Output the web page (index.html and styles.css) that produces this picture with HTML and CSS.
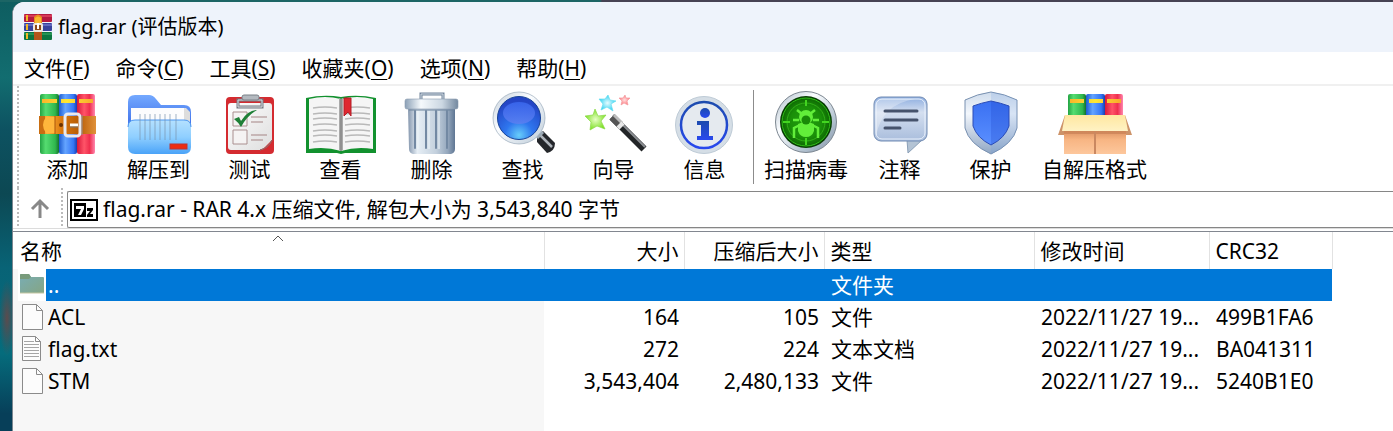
FILE: index.html
```html
<!DOCTYPE html>
<html lang="zh-CN">
<head>
<meta charset="utf-8">
<title>flag.rar (评估版本)</title>
<link rel="stylesheet" href="styles.css">
</head>
<body>
<svg class="defs" aria-hidden="true">
  <defs>
    <linearGradient id="green"><stop offset="0" stop-color="#23a343"/><stop offset=".3" stop-color="#55dc70"/><stop offset=".8" stop-color="#2fb74e"/><stop offset="1" stop-color="#15702c"/></linearGradient>
    <linearGradient id="blue"><stop offset="0" stop-color="#1d5bd0"/><stop offset=".35" stop-color="#64a4ff"/><stop offset=".8" stop-color="#3476f5"/><stop offset="1" stop-color="#1a3fae"/></linearGradient>
    <linearGradient id="red"><stop offset="0" stop-color="#d8183a"/><stop offset=".4" stop-color="#ff5468"/><stop offset=".7" stop-color="#ef2f4e"/><stop offset="1" stop-color="#ff86ae"/></linearGradient>
    <linearGradient id="gold"><stop offset="0" stop-color="#f9b52a"/><stop offset=".5" stop-color="#ffe834"/><stop offset="1" stop-color="#f7a92c"/></linearGradient>
    <linearGradient id="belt"><stop offset="0" stop-color="#e58a1c"/><stop offset=".15" stop-color="#ffb136"/><stop offset=".4" stop-color="#d9780f"/><stop offset=".7" stop-color="#b85c06"/><stop offset="1" stop-color="#e0913a"/></linearGradient>
    <linearGradient id="steel" x1="0" y1="0" x2="1" y2="1"><stop offset="0" stop-color="#a9b8c6"/><stop offset=".35" stop-color="#fbfdff"/><stop offset=".7" stop-color="#b5c4d2"/><stop offset="1" stop-color="#7e8fa3"/></linearGradient>
    <linearGradient id="bright" x1="0" y1="0" x2="1" y2="1"><stop offset="0" stop-color="#c3ced9"/><stop offset=".4" stop-color="#fbfdff"/><stop offset="1" stop-color="#bccbd8"/></linearGradient>
    <linearGradient id="paper" x1="0" y1="0" x2="1" y2="1"><stop offset="0" stop-color="#fff"/><stop offset="1" stop-color="#dedede"/></linearGradient>
    <linearGradient id="back" x1="0" y1="0" x2="0" y2="1"><stop offset="0" stop-color="#74a9ff"/><stop offset="1" stop-color="#2656df"/></linearGradient>
    <linearGradient id="front" x1="0" y1="0" x2="0" y2="1"><stop offset="0" stop-color="#b5e1ff"/><stop offset=".5" stop-color="#8fcfff"/><stop offset="1" stop-color="#4aa3f8"/></linearGradient>
    <linearGradient id="trash"><stop offset="0" stop-color="#8496ad"/><stop offset=".2" stop-color="#e6eef5"/><stop offset=".6" stop-color="#c3d0dd"/><stop offset=".85" stop-color="#93a6bc"/><stop offset="1" stop-color="#5f7693"/></linearGradient>
    <linearGradient id="rim"><stop offset="0" stop-color="#8ba0b6"/><stop offset=".3" stop-color="#f5f9fc"/><stop offset=".7" stop-color="#cbd7e2"/><stop offset="1" stop-color="#73889f"/></linearGradient>
    <radialGradient id="lens" cx=".5" cy=".9" r=".8"><stop offset="0" stop-color="#67cdfa"/><stop offset=".4" stop-color="#2e76ee"/><stop offset="1" stop-color="#2444c5"/></radialGradient>
    <linearGradient id="gloss" x1="0" y1="0" x2="0" y2="1"><stop offset="0" stop-color="#3c6af2"/><stop offset="1" stop-color="#6080f0"/></linearGradient>
    <linearGradient id="info" x1="0" y1="0" x2="0" y2="1"><stop offset="0" stop-color="#1d4cae"/><stop offset="1" stop-color="#2848ee"/></linearGradient>
    <radialGradient id="scan"><stop offset="0" stop-color="#249e10"/><stop offset=".65" stop-color="#1a9009"/><stop offset="1" stop-color="#0f6a04"/></radialGradient>
    <linearGradient id="note" x1="0" y1="0" x2="0" y2="1"><stop offset="0" stop-color="#8eaee0"/><stop offset=".35" stop-color="#d4dff0"/><stop offset="1" stop-color="#a9bddc"/></linearGradient>
    <linearGradient id="shield" x1="0" y1="0" x2="0" y2="1"><stop offset="0" stop-color="#cfdcec"/><stop offset=".35" stop-color="#f3f7fc"/><stop offset="1" stop-color="#8fa6c4"/></linearGradient>
    <linearGradient id="core" x1="0" y1="0" x2="0" y2="1"><stop offset="0" stop-color="#3a70f2"/><stop offset="1" stop-color="#5a8fff"/></linearGradient>
    <linearGradient id="carton" x1="0" y1="0" x2="0" y2="1"><stop offset="0" stop-color="#d98e5e"/><stop offset=".4" stop-color="#f7b583"/><stop offset="1" stop-color="#fdc79c"/></linearGradient>
    <linearGradient id="flap" x1="0" y1="0" x2="0" y2="1"><stop offset="0" stop-color="#ffe7a0"/><stop offset="1" stop-color="#fff2c4"/></linearGradient>
    <radialGradient id="starG"><stop offset="0" stop-color="#e6ffc4"/><stop offset="1" stop-color="#7fe028"/></radialGradient>
    <radialGradient id="starC"><stop offset="0" stop-color="#e6fcff"/><stop offset="1" stop-color="#35d2f2"/></radialGradient>
    <radialGradient id="starR"><stop offset="0" stop-color="#ffe0e0"/><stop offset="1" stop-color="#ff7a80"/></radialGradient>
    <linearGradient id="dir" x1="0" y1="0" x2="1" y2="1"><stop offset="0" stop-color="#78adb5"/><stop offset="1" stop-color="#85a584"/></linearGradient>
  </defs>
</svg>

<main class="window">
  <header class="titlebar">
    <svg class="appicon" viewBox="0 0 28 26" aria-hidden="true">
      <rect width="28" height="8" rx="1" fill="#b51940"/><rect y="1" width="28" height="2" fill="#d63a58"/>
      <rect y="9" width="28" height="8" rx="1" fill="#38439d"/><rect y="10" width="28" height="2" fill="#6068be"/>
      <rect y="18" width="28" height="8" rx="1" fill="#0b7540"/><rect y="19" width="28" height="2" fill="#259453"/>
      <path d="M3 1v6M3 10v6M3 19v6" stroke="#f3b926" stroke-width="2"/>
      <path d="M10 3q4-5 8 0v23h-8z" fill="#e88a20"/><path d="M11 4q3-3 6 0v5h-6z" fill="#f8b930"/>
      <rect x="10" y="10" width="8" height="7" rx="1" fill="#8f4a18" stroke="#efe8dc" stroke-width="2"/>
      <path d="M14 9v6" stroke="#fff" stroke-width="2"/><path d="M10 18h8v8h-8z" fill="#b4551a"/>
    </svg>
    <h1 class="title">flag.rar (评估版本)</h1>
  </header>

  <nav class="menubar" aria-label="菜单">
    <button class="menu">文件(<u>F</u>)</button>
    <button class="menu">命令(<u>C</u>)</button>
    <button class="menu">工具(<u>S</u>)</button>
    <button class="menu">收藏夹(<u>O</u>)</button>
    <button class="menu">选项(<u>N</u>)</button>
    <button class="menu">帮助(<u>H</u>)</button>
  </nav>

  <div class="toolbar" role="toolbar">
    <span class="grip"></span>
    <button class="tool">
      <svg class="icon" viewBox="0 0 64 64" aria-hidden="true">
        <rect x="4" y="2" width="19" height="60" rx="2" fill="url(#green)"/><rect x="23" y="2" width="18" height="60" rx="2" fill="url(#blue)"/><rect x="41" y="2" width="18" height="60" rx="2" fill="url(#red)"/>
        <path d="M6 7h15v4H6zM25 7h14v4H25zM43 7h14v4H43z" fill="url(#gold)"/>
        <path d="M8 24h52v18H8q-5-3-5-9t5-9z" fill="url(#belt)"/><path d="M3 24h6v18H3z" fill="#c96e12"/>
        <path d="M10 25h9v16h-9q-6-8 0-16z" fill="#ffb63c"/><path d="M19 24v18M44 24v18" stroke="#a9540a"/>
        <circle cx="25" cy="33" r="2" fill="#6b3100"/>
        <rect x="29" y="22" width="15" height="22" rx="3" fill="none" stroke="#e9e9ee" stroke-width="3"/>
        <path d="M46 23v20" stroke="#8f8f98"/><path d="M34 33h8" stroke="#fff" stroke-width="3"/><path d="M34 35h8" stroke="#777"/>
      </svg>
      <span>添加</span>
    </button>
    <button class="tool">
      <svg class="icon" viewBox="0 0 64 64" aria-hidden="true">
        <path d="M1 10q0-7 7-7h14q4 0 7 4l5 6h23q7 0 7 7v28H1z" fill="url(#back)"/>
        <path d="M5 16h54l4 4v22H5z" fill="#ddd"/><path d="M4 16h53v24H4z" fill="#fcfcfd"/>
        <path d="M1 35q0-7 7-7h49q7 0 7 7v20q0 7-7 7H8q-7 0-7-7z" fill="url(#front)"/>
        <path d="M1 35q0-7 7-7h49q7 0 7 7" fill="none" stroke="#4c97f2"/>
        <path d="M13 22v26M18 22v26M23 22v26M28 22v26M33 22v26M38 22v26M43 22v26M49 22v26" stroke="#7893ad" stroke-opacity=".35" stroke-width="2"/>
        <rect x="43" y="52" width="17" height="5" fill="#ee2c12" stroke="#bb3535"/>
      </svg>
      <span>解压到</span>
    </button>
    <button class="tool">
      <svg class="icon" viewBox="0 0 64 64" aria-hidden="true">
        <rect x="8" y="5" width="48" height="57" rx="4" fill="#d42b30"/>
        <path d="M13 11h38q3 0 3 3v34l-10 10H13q-3 0-3-3V14q0-3 3-3z" fill="url(#paper)"/><path d="M54 48q-3 8-12 10 8-2 12-10z" fill="#aaa" stroke="#9e6161"/>
        <path d="M20 15V8h24v7z" fill="none" stroke="#747981" stroke-width="3"/><path d="M20 15V8h24v7z" fill="none" stroke="#d9dce0"/>
        <rect x="24" y="3" width="17" height="5" rx="2" fill="#b3b9bf" stroke="#7b8188"/>
        <path d="M15 20h14v14H15zM15 38h14v14H15z" fill="#f5f3f3" stroke="#aa8f8f"/>
        <path d="M33 25h16M33 30h12M33 43h16M33 48h12" stroke="#a58585"/>
        <path d="m16 27 5-2 2 4q7-11 16-11-10 6-16 17-3-5-7-8z" fill="#1f8037"/>
      </svg>
      <span>测试</span>
    </button>
    <button class="tool">
      <svg class="icon" viewBox="0 0 64 64" aria-hidden="true">
        <path d="M-3 6q18-4 35-1 17-3 35 1v55H36l-4 1-4-1H-3z" fill="#12912e"/>
        <path d="M0 7q16-4 32 0v52q-16-5-32-2z" fill="#f5f5f5"/><path d="M32 7q16-4 32 0v50q-16-3-32 2z" fill="#f5f5f5"/>
        <path d="M30 6l2 1 2-1v52l-2 1-2-1z" fill="#aaa"/><path d="M32 7v52" stroke="#777"/>
        <path d="M4 16q12-2 24 0M4 22q12-2 24 0M4 27q12-2 24 0M4 33q12-2 24 0M4 39q12-2 24 0M4 44q12-2 24 0M4 50q12-2 24 0M36 16q12-2 25 0M36 22q12-2 25 0M36 27q12-2 25 0M36 33q12-2 25 0M36 39q12-2 25 0M36 44q12-2 25 0M36 50q12-2 25 0" fill="none" stroke="#b9b9b9" stroke-width="1.3"/>
        <path d="M35 6h7v18l-3-4-4 4z" fill="#df2830" stroke="#b31d26"/>
      </svg>
      <span>查看</span>
    </button>
    <button class="tool">
      <svg class="icon" viewBox="0 0 64 64" aria-hidden="true">
        <path d="M21 8V2h22v6" fill="none" stroke="#71849b" stroke-width="3"/><path d="M21 7V2h22v5" fill="none" stroke="#d0d9e2"/>
        <path d="M8 16h47v41q0 4-4 5H13q-4-1-4-5z" fill="url(#trash)"/>
        <path d="M15 19v37M26 19v37M36 19v37M47 19v37" stroke="#7389a3" stroke-width="2" stroke-linecap="round"/>
        <path d="M18 19v38M29 19v38M39 19v38" stroke="#edf3f8" stroke-opacity=".7" stroke-width="1.5"/>
        <rect x="5" y="7" width="53" height="10" rx="2" fill="url(#rim)" stroke="#899bae" stroke-width=".6"/><path d="M9 18h45" stroke="#6d839c"/>
      </svg>
      <span>删除</span>
    </button>
    <button class="tool">
      <svg class="icon" viewBox="0 0 64 64" aria-hidden="true">
        <path d="M46 44l6-5 12 12q0 8-8 10L46 50z" fill="#24272b"/><path d="M49 43l12 12" stroke="#aeb4ba" stroke-width="2.5"/><path d="M46 46l6-6" stroke="#9ba9b5" stroke-width="3"/>
        <circle cx="28" cy="26" r="26" fill="url(#bright)" stroke="#9aaaba" stroke-width=".7"/><circle cx="28" cy="26" r="21.5" fill="url(#lens)" stroke="#174397"/>
        <ellipse cx="28" cy="21" rx="16" ry="11" fill="url(#gloss)" opacity=".8"/>
      </svg>
      <span>查找</span>
    </button>
    <button class="tool">
      <svg class="icon" viewBox="0 0 64 64" aria-hidden="true">
        <path d="M13 17l3 7 8-1-5 6 4 8-8-3-7 4 1-8-6-6 8-1z" fill="url(#starG)" stroke="#8bda48" stroke-width=".7"/>
        <path d="M26 3l2 5 6 1-5 3 2 7-6-4-6 3 2-6-4-5 6 0z" fill="url(#starC)" stroke="#67dff1" stroke-width=".7"/>
        <path d="M43 3l1 3 4 0-3 3 1 4-4-2-3 2 1-4-3-3 4 0z" fill="url(#starR)" stroke="#f49ca0" stroke-width=".7"/>
        <path d="M30 25l32 32" stroke="#222527" stroke-width="7"/><path d="M31 23l32 32" stroke="#8b8f92" stroke-width="2"/>
        <path d="M30 25l8 8" stroke="#555" stroke-width="7"/><path d="M32 23l8 8" stroke="#bbb" stroke-width="3"/><path d="M37 32l3 3" stroke="#e8e8e8" stroke-width="7"/>
      </svg>
      <span>向导</span>
    </button>
    <button class="tool">
      <svg class="icon" viewBox="0 0 64 64" aria-hidden="true">
        <circle cx="31" cy="33" r="28.500" fill="#d5dee6" stroke="#becbd6"/><circle cx="31" cy="33" r="23" fill="#e5eaef" stroke="url(#info)" stroke-width="2.500"/>
        <circle cx="32" cy="21" r="5" fill="url(#info)"/><path d="M24 29h12v15h4v4H24v-4h4V33h-4z" fill="url(#info)"/>
      </svg>
      <span>信息</span>
    </button>
    <span class="rule"></span>
    <button class="tool">
      <svg class="icon" viewBox="0 0 64 64" aria-hidden="true">
        <circle cx="32" cy="30" r="30.500" fill="url(#steel)" stroke="#7d8791"/><circle cx="32" cy="30" r="26" fill="#083f03"/><circle cx="32" cy="30" r="24" fill="url(#scan)" stroke="#30c018"/>
        <circle cx="32" cy="30" r="19" fill="none" stroke="#31af18"/><path d="M32 8v6M32 46v7M9 30h7M48 30h7" stroke="#42d520" stroke-width="2"/>
        <circle cx="32" cy="25" r="7" fill="#62ee3a"/><path d="M24 32q8-4 16 0v7q-2 6-8 6t-8-6z" fill="#62ee3a"/><circle cx="32" cy="28" r="4.500" fill="#198a08"/>
        <path d="M28 22l-5-4M36 22l5-4M25 28h-6M39 28h6M26 33l-6 3v10M38 33l6 3v10" fill="none" stroke="#62ee3a" stroke-width="2.500"/>
      </svg>
      <span>扫描病毒</span>
    </button>
    <button class="tool">
      <svg class="icon" viewBox="0 0 64 64" aria-hidden="true">
        <path d="M39 48h15L40 61z" fill="#b3c3d4" stroke="#8ba0b8"/><rect x="6" y="5" width="53" height="44" rx="7" fill="url(#note)" stroke="#718bb3"/>
        <rect x="8" y="7" width="49" height="40" rx="6" fill="none" stroke="#e9f1fc"/><path d="M8 44V13q0-6 6-6h33Q14 12 8 44z" fill="#fff" opacity=".3"/>
        <path d="M17 19h32M17 28h32M17 36h15" stroke="#46536c" stroke-width="3" stroke-linecap="round"/>
      </svg>
      <span>注释</span>
    </button>
    <button class="tool">
      <svg class="icon" viewBox="0 0 64 64" aria-hidden="true">
        <path d="M32 0Q46 2 58 8v28Q54 52 32 62 10 52 6 36V8Q18 2 32 0z" fill="url(#shield)" stroke="#7890b0"/>
        <path d="M32 0Q46 2 58 8v28Q54 52 32 62z" fill="#6d9ada" opacity=".2"/>
        <path d="M32 9q10 2 18 5v20q-4 12-18 19-14-7-18-19V14q8-3 18-5z" fill="url(#core)" stroke="#2c4db5"/><path d="M32 9q10 2 18 5v20q-4 12-18 19z" fill="#1c42c7" opacity=".25"/>
      </svg>
      <span>保护</span>
    </button>
    <button class="tool">
      <svg class="icon" viewBox="0 0 64 64" aria-hidden="true">
        <rect x="5" y="2" width="18" height="26" rx="2" fill="url(#green)"/><rect x="23" y="2" width="19" height="26" rx="2" fill="url(#blue)"/><rect x="42" y="2" width="18" height="26" rx="2" fill="url(#red)"/>
        <path d="M7 7h14v4H7zM26 7h14v4H26zM44 7h14v4H44z" fill="url(#gold)"/>
        <path d="M2 23l-7 20h6l5-12M62 23l7 20h-6l-5-12" fill="#cd9369"/><path d="M1 38h62v24H1z" fill="url(#carton)"/>
        <path d="M2 23h60l1 15v4H1v-4z" fill="#c98257" opacity=".7"/><path d="M2 23h60l3 16H-1z" fill="url(#flap)"/><path d="M32 40v22" stroke="#ca8860" stroke-width="2"/>
      </svg>
      <span>自解压格式</span>
    </button>
  </div>

  <div class="addressbar">
    <span class="grip"></span>
    <button class="up" aria-label="向上">
      <svg viewBox="0 0 20 20" aria-hidden="true"><path d="M10 20V3M2 11l8-8 8 8" fill="none" stroke="#888" stroke-width="3"/></svg>
    </button>
    <span class="grip"></span>
    <label class="address">
      <svg viewBox="0 0 28 22" aria-hidden="true">
        <rect x="1" y="1" width="26" height="20" fill="#fff" stroke="#000" stroke-width="2"/><rect x="4" y="4" width="12" height="14"/>
        <path d="M6 7h8v3l-3 6H8l3-6H6z" fill="#fff"/><path d="M17 9h6v2l-3 4h3v3h-6v-2l3-4h-3z"/>
      </svg>
      <input type="text" aria-label="地址" value="flag.rar - RAR 4.x 压缩文件, 解包大小为 3,543,840 字节">
    </label>
  </div>

  <section class="list">
    <table class="files">
      <colgroup><col class="c-name"><col class="c-size"><col class="c-size"><col class="c-type"><col class="c-date"><col class="c-crc"></colgroup>
      <thead>
        <tr>
          <th>名称<svg class="sort" viewBox="0 0 12 6" aria-hidden="true"><path d="M1 6l5-5 5 5" fill="none" stroke="#555"/></svg></th>
          <th class="num">大小</th><th class="num">压缩后大小</th><th>类型</th><th>修改时间</th><th>CRC32</th>
        </tr>
      </thead>
      <tbody>
        <tr class="selected">
          <td><div class="name"><span class="fileicon"><svg viewBox="0 0 28 32" aria-hidden="true"><path d="M2 6q0-1 1-1h8l2 3h12q1 0 1 1v15H2z" fill="url(#dir)"/><path d="M2 6q0-1 1-1h8l2 3-2 2H2z" fill="#789b7b"/><path d="M2 24h24" stroke="#c5c6a0"/></svg></span><span class="label">..</span></div></td>
          <td class="num"></td><td class="num"></td><td>文件夹</td><td></td><td></td>
        </tr>
        <tr>
          <td><div class="name"><span class="fileicon"><svg viewBox="0 0 28 32" aria-hidden="true"><path d="M4.500 3.500h14l6 6v19h-20z" fill="#fcfcfc" stroke="#8b8b8b"/><path d="M18.500 3.500v6h6" fill="none" stroke="#8b8b8b"/></svg></span><span class="label">ACL</span></div></td>
          <td class="num">164</td><td class="num">105</td><td>文件</td><td>2022/11/27 19...</td><td>499B1FA6</td>
        </tr>
        <tr>
          <td><div class="name"><span class="fileicon"><svg viewBox="0 0 28 32" aria-hidden="true"><path d="M4.500 3.500h13l5 5v19h-18z" fill="#fcfcfc" stroke="#8b8b8b"/><path d="M17.500 3.500v5h5" fill="none" stroke="#8b8b8b"/><path d="M6 8.500h10M6 11.500h15M6 14.500h15M6 17.500h15M6 20.500h15M6 23.500h15" stroke="#a5a5a5"/></svg></span><span class="label">flag.txt</span></div></td>
          <td class="num">272</td><td class="num">224</td><td>文本文档</td><td>2022/11/27 19...</td><td>BA041311</td>
        </tr>
        <tr>
          <td><div class="name"><span class="fileicon"><svg viewBox="0 0 28 32" aria-hidden="true"><path d="M4.500 3.500h14l6 6v19h-20z" fill="#fcfcfc" stroke="#8b8b8b"/><path d="M18.500 3.500v6h6" fill="none" stroke="#8b8b8b"/></svg></span><span class="label">STM</span></div></td>
          <td class="num">3,543,404</td><td class="num">2,480,133</td><td>文件</td><td>2022/11/27 19...</td><td>5240B1E0</td>
        </tr>
      </tbody>
    </table>
    <div class="filler"></div>
  </section>
</main>
</body>
</html>
```
FILE: styles.css
```css
* { box-sizing: border-box; }
body {
  margin: 0;
  min-height: 100vh;
  display: flex;
  padding: 2px 0 0 12px;
  overflow: hidden;
  background:
    linear-gradient(90deg, #1c6565 0, #1c6565 600px, #464253 602px) top / 100% 2px no-repeat,
    radial-gradient(ellipse 8px 38px at 7px 318px, #5b4b4d, transparent),
    linear-gradient(#0e5d60, #126d70 18%, #0d5261 30%, #0c4853 45%, #086376 62%, #056c7c 82%, #073f59 96%);
  font: 21px/28px "Noto Sans", "Noto Sans CJK SC", sans-serif;
  color: #000;
}
button, input { font: inherit; color: inherit; background: none; border: 0; padding: 0; margin: 0; }
svg { display: block; flex: none; }
.defs { position: absolute; width: 0; height: 0; }
.window {
  flex: 1;
  min-width: 0;
  display: flex;
  flex-direction: column;
  background: #fff;
  border-left: 1px solid #7c8790;
  border-top-left-radius: 12px;
  overflow: hidden;
}
.titlebar { display: flex; align-items: center; gap: 6px; height: 50px; padding-left: 11px; background: #eef3fb; }
.appicon { width: 28px; height: 26px; }
.title { margin: 0; font-size: 20px; font-weight: 400; }
.menubar { display: flex; align-items: center; gap: 26px; height: 34px; padding-left: 11px; border-bottom: 2px solid #f0f0f0; }
.menu { white-space: nowrap; line-height: 32px; }
.menu u { text-decoration-thickness: 1px; text-underline-offset: 3px; }
.grip {
  flex: none;
  align-self: stretch;
  width: 2px;
  background: repeating-linear-gradient(#bbb 0, #bbb 2px, #fff 2px, #fff 4px);
}
.toolbar { display: flex; height: 102px; padding-left: 4px; }
.tool {
  display: flex;
  flex-direction: column;
  align-items: center;
  flex: none;
  min-width: 91px;
  padding: 6px 6px 0;
  line-height: 26px;
  white-space: nowrap;
}
.toolbar > .grip { margin-right: 3px; }
.icon { width: 64px; height: 64px; overflow: visible; }
.rule { flex: none; width: 1px; margin: 4px 4px 4px 3px; background: #8c8c8c; }
.addressbar { display: flex; height: 41px; padding-left: 4px; border-bottom: 1px solid #dcdcdc; }
.up { width: 42px; padding-left: 11px; }
.up svg { width: 20px; height: 20px; }
.address {
  flex: 1;
  display: flex;
  align-items: center;
  gap: 5px;
  margin: 3px 0 0 4px;
  height: 37px;
  padding-left: 2px;
  border: 1px solid #868686;
  border-right: 0;
  border-radius: 2px 0 0 2px;
}
.address svg { width: 28px; height: 22px; }
.address input { flex: 1; min-width: 0; padding-bottom: 2px; outline: 0; }
.list { flex: 1; display: flex; flex-direction: column; margin-top: 2px; border-top: 1px solid #828790; }
.files { border-collapse: collapse; table-layout: fixed; width: 1319px; }
.c-name { width: 531px; }
.c-size { width: 140px; }
.c-type { width: 210px; }
.c-date { width: 175px; }
.c-crc { width: 123px; }
th { position: relative; height: 37px; padding: 0 5px 0 6px; font-weight: 400; text-align: left; border-right: 1px solid #e2e2e2; }
th:first-child { padding-left: 7px; }
.sort { position: absolute; left: 50%; top: 3px; width: 12px; height: 6px; margin-left: -6px; }
td { height: 32px; padding: 0 4px 0 7px; white-space: nowrap; }
.num { text-align: right; padding-right: 5px; }
td:first-child { padding: 0; background: #f7f7f7; }
.name { display: flex; }
.fileicon { width: 28px; margin-left: 5px; }
.fileicon svg { width: 28px; height: 32px; }
.label { flex: 1; padding-left: 2px; line-height: 32px; }
.selected { background: #0078d7; color: #fff; }
.selected .fileicon { background: #fff; }
.selected .label { background: #0078d7; }
.filler { flex: 1; width: 531px; background: #f7f7f7; }
```
